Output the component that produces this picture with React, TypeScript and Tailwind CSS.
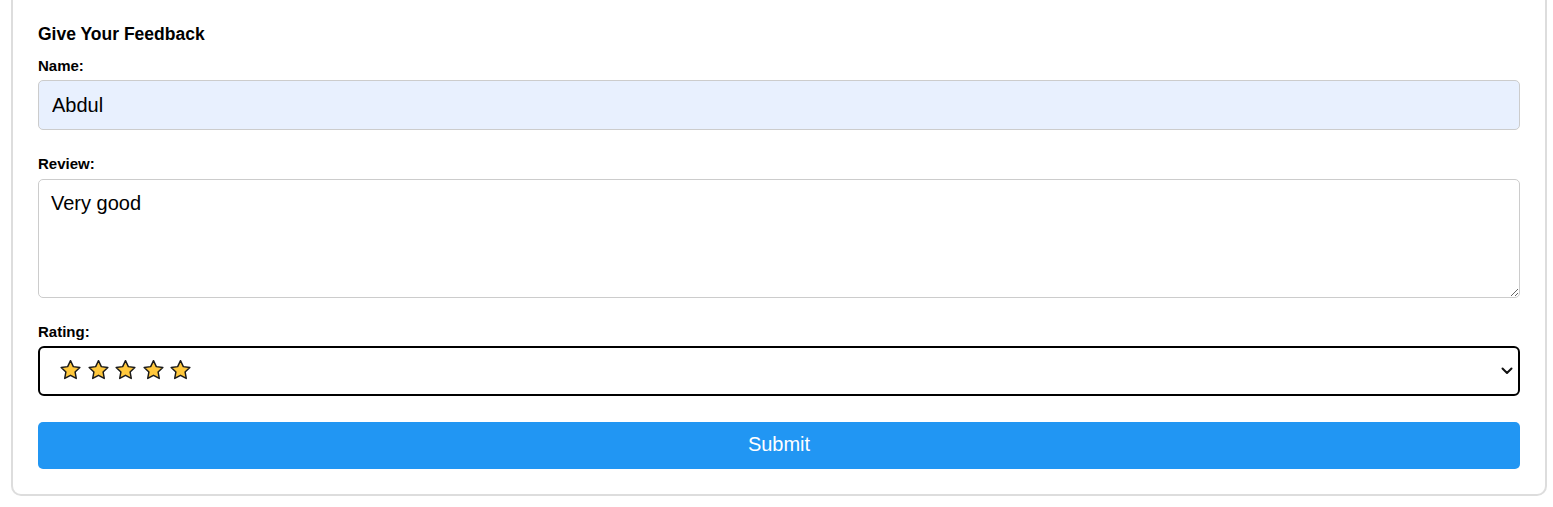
import React from "react";

function Star() {
  return (
    <svg width="23" height="22" viewBox="0 0 24 24" className="block">
      <polygon
        points="12,1.8 15.1,8.3 22.2,9.2 17,14.1 18.3,21.2 12,17.8 5.7,21.2 7,14.1 1.8,9.2 8.9,8.3"
        fill="#FFC83D"
        stroke="#1a1a1a"
        strokeWidth="1.6"
        strokeLinejoin="round"
      />
    </svg>
  );
}

export default function App() {
  const font = { fontFamily: '"Liberation Sans", Arial, sans-serif' };
  return (
    <div className="bg-white w-full h-[507px] overflow-hidden" style={font}>
      <div className="ml-[11px] w-[1536px] border-2 border-t-0 border-[#dddddd] rounded-b-[10px] bg-white px-[25px] pb-[25px] pt-[24px]">
        <h3 className="text-[17.5px] leading-[20px] font-bold text-black">Give Your Feedback</h3>
        <label className="block mt-[13px] mb-[6px] text-[15px] leading-[17px] font-bold text-black">Name:</label>
        <input
          readOnly
          value="Abdul"
          className="block w-full h-[50px] px-[13px] border border-[#cccccc] rounded-[5px] bg-[#e8f0fe] text-[20px] text-black outline-none"
          style={font}
        />
        <label className="block mt-[25px] mb-[7px] text-[15px] leading-[17px] font-bold text-black">Review:</label>
        <textarea
          readOnly
          value="Very good"
          className="block w-full h-[119px] p-[12px] border border-[#cccccc] rounded-[5px] bg-white text-[20px] leading-[23px] text-black outline-none resize-y"
          style={font}
        />
        <label className="block mt-[25px] mb-[6px] text-[15px] leading-[17px] font-bold text-black">Rating:</label>
        <div className="flex items-center justify-between w-full h-[50px] pl-[19px] pr-[4px] border-2 border-black rounded-[6px] bg-white">
          <div className="flex items-center gap-[4.5px] mt-[-2px]">
            <Star />
            <Star />
            <Star />
            <Star />
            <Star />
          </div>
          <svg width="12" height="8" viewBox="0 0 12 8" className="block mr-[1px]">
            <path d="M1.5 1.5 L6 6 L10.5 1.5" fill="none" stroke="#111" strokeWidth="2" strokeLinecap="round" strokeLinejoin="round" />
          </svg>
        </div>
        <button
          className="block w-full h-[47px] mt-[26px] rounded-[5px] bg-[#2196f3] text-white text-[20px] leading-[23px] pb-[2px]"
          style={font}
        >
          Submit
        </button>
      </div>
    </div>
  );
}
